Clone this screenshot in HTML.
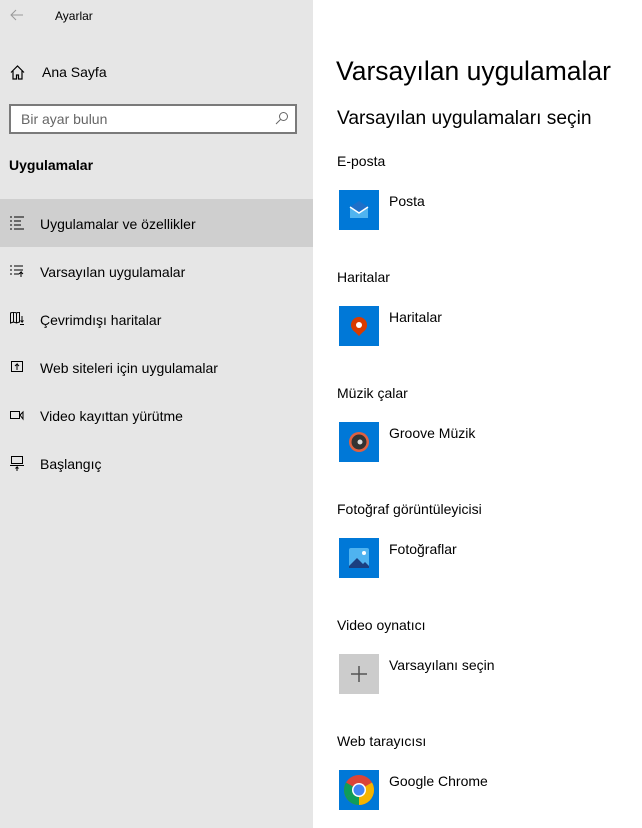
<!DOCTYPE html>
<html><head><meta charset="utf-8"><style>
*{margin:0;padding:0;box-sizing:border-box}
body{width:642px;height:828px;overflow:hidden;font-family:"Segoe UI","Liberation Sans",sans-serif;color:#000;position:relative;background:#fff}
#side{position:absolute;left:0;top:0;width:313px;height:828px;background:#e6e6e6}
.a{position:absolute;white-space:nowrap}
.item{position:absolute;left:0;width:313px;height:48px;font-size:14px}
.item span{position:absolute;left:40px;top:17px}
.item svg{position:absolute;left:10px;top:17px}
.lbl{position:absolute;left:337px;font-size:14px}
.ic{position:absolute;left:339px;width:40px;height:40px;background:#0078d7}
.nm{position:absolute;left:389px;font-size:14px}
</style></head><body>
<div id="side">
<svg class="a" style="left:10px;top:9px" width="14" height="12" viewBox="0 0 14 12"><path d="M13 6H1M6 1L1 6l5 5" stroke="#999" fill="none" stroke-width="1"/></svg>
<div class="a" style="left:55px;top:9px;font-size:12px">Ayarlar</div>
<svg class="a" style="left:10px;top:65px" width="15" height="15" viewBox="0 0 15 15"><path d="M1 7.5L7.5 1 14 7.5M3 6v8h3.5v-4h2v4H12V6" stroke="#000" fill="none" stroke-width="1.2"/></svg>
<div class="a" style="left:42px;top:64px;font-size:14px">Ana Sayfa</div>
<div class="a" style="left:9px;top:104px;width:288px;height:30px;border:2px solid #7a7a7a;background:#fff"></div>
<div class="a" style="left:21px;top:111px;font-size:14px;color:#666">Bir ayar bulun</div>
<svg class="a" style="left:275px;top:111px" width="14" height="14" viewBox="0 0 14 14"><circle cx="8.5" cy="5.5" r="4" stroke="#666" fill="none"/><path d="M5.5 8.5L1 13" stroke="#666"/></svg>
<div class="a" style="left:9px;top:157px;font-size:14px;font-weight:bold">Uygulamalar</div>
<div class="item" style="top:199px;background:#cfcfcf"><svg width="14" height="14" viewBox="0 0 14 14"><path d="M0 1h2M0 5h2M0 9h2M0 13h2M4 1h10M4 5h7M4 9h7M4 13h10" stroke="#000"/></svg><span>Uygulamalar ve özellikler</span></div>
<div class="item" style="top:247px"><svg width="14" height="14" viewBox="0 0 14 14"><path d="M0 2h2M0 6h2M0 10h2M4 2h9M4 6h9M4 10h5M11 13V8l-2 2M11 8l2 2" stroke="#000" fill="none"/></svg><span>Varsayılan uygulamalar</span></div>
<div class="item" style="top:295px"><svg width="14" height="14" viewBox="0 0 14 14"><path d="M0.5 1v10l3-1 3 1 3-1V0l-3 1-3-1zM3.5 0v10M6.5 1v10M12 4v6l-1.5-1.5M12 10l1.5-1.5M10 12.5h4" stroke="#000" fill="none"/></svg><span>Çevrimdışı haritalar</span></div>
<div class="item" style="top:343px"><svg width="14" height="14" viewBox="0 0 14 14"><rect x="1.5" y="1.5" width="11" height="10" stroke="#000" fill="none"/><path d="M7 10V4l-2 2M7 4l2 2" stroke="#000" fill="none"/></svg><span>Web siteleri için uygulamalar</span></div>
<div class="item" style="top:391px"><svg width="14" height="14" viewBox="0 0 14 14"><rect x="0.5" y="3.5" width="9" height="7" stroke="#000" fill="none"/><path d="M10 7l3-3v7z" stroke="#000" fill="none"/></svg><span>Video kayıttan yürütme</span></div>
<div class="item" style="top:439px"><svg width="14" height="16" viewBox="0 0 14 16"><rect x="1.5" y="0.5" width="11" height="7" stroke="#000" fill="none"/><path d="M0 9.5h14M7 15v-4l-1.5 1.5M7 11l1.5 1.5" stroke="#000" fill="none"/></svg><span>Başlangıç</span></div>
</div>
<div class="a" style="left:336px;top:56px;font-size:26.5px;font-weight:300">Varsayılan uygulamalar</div>
<div class="a" style="left:337px;top:108px;font-size:19.2px">Varsayılan uygulamaları seçin</div>

<div class="lbl" style="top:153px">E-posta</div>
<div class="ic" style="top:190px"><svg width="40" height="40"><path d="M11 17l9-6 9 6v11H11z" fill="#1e6fc8"/><path d="M11 17l9 6 9-6v11H11z" fill="#50b4f0"/><path d="M11 17l9 6 9-6" stroke="#fff" fill="none" stroke-width="1.5"/></svg></div>
<div class="nm" style="top:193px">Posta</div>

<div class="lbl" style="top:269px">Haritalar</div>
<div class="ic" style="top:306px"><svg width="40" height="40"><circle cx="20" cy="19" r="8" fill="#d83b01"/><path d="M14 24l6 6 6-6z" fill="#d83b01"/><circle cx="20" cy="19" r="3" fill="#fff"/></svg></div>
<div class="nm" style="top:309px">Haritalar</div>

<div class="lbl" style="top:385px">Müzik çalar</div>
<div class="ic" style="top:422px"><svg width="40" height="40"><circle cx="20" cy="20" r="10" fill="#e06040"/><circle cx="20" cy="20" r="7.5" fill="#333"/><circle cx="21" cy="20" r="2.5" fill="#ddd"/></svg></div>
<div class="nm" style="top:425px">Groove Müzik</div>

<div class="lbl" style="top:501px">Fotoğraf görüntüleyicisi</div>
<div class="ic" style="top:538px"><svg width="40" height="40"><rect x="10" y="10" width="20" height="20" rx="2" fill="#4fb3f0"/><path d="M10 28l8-8 6 6 2-2 4 4v2H10z" fill="#1b3f80"/><circle cx="25" cy="15" r="2" fill="#fff"/></svg></div>
<div class="nm" style="top:541px">Fotoğraflar</div>

<div class="lbl" style="top:617px">Video oynatıcı</div>
<div class="ic" style="top:654px;background:#ccc"><svg width="40" height="40"><path d="M20 12v16M12 20h16" stroke="#555" stroke-width="1.5"/></svg></div>
<div class="nm" style="top:657px">Varsayılanı seçin</div>

<div class="lbl" style="top:733px">Web tarayıcısı</div>
<div class="ic" style="top:770px"><svg width="40" height="40" viewBox="0 0 40 40"><circle cx="20" cy="20" r="15" fill="#db4437"/><path d="M20 20L7 27.5A15 15 0 0 0 20 35z" fill="#0f9d58"/><path d="M7 27.5A15 15 0 0 1 7 12.5L20 20z" fill="#0f9d58"/><path d="M20 20h15A15 15 0 0 1 20 35z" fill="#f4b400"/><path d="M20 20h15a15 15 0 0 0-2-7.5z" fill="#f4b400"/><circle cx="20" cy="20" r="7" fill="#fff"/><circle cx="20" cy="20" r="5.5" fill="#4285f4"/></svg></div>
<div class="nm" style="top:773px">Google Chrome</div>
</body></html>
